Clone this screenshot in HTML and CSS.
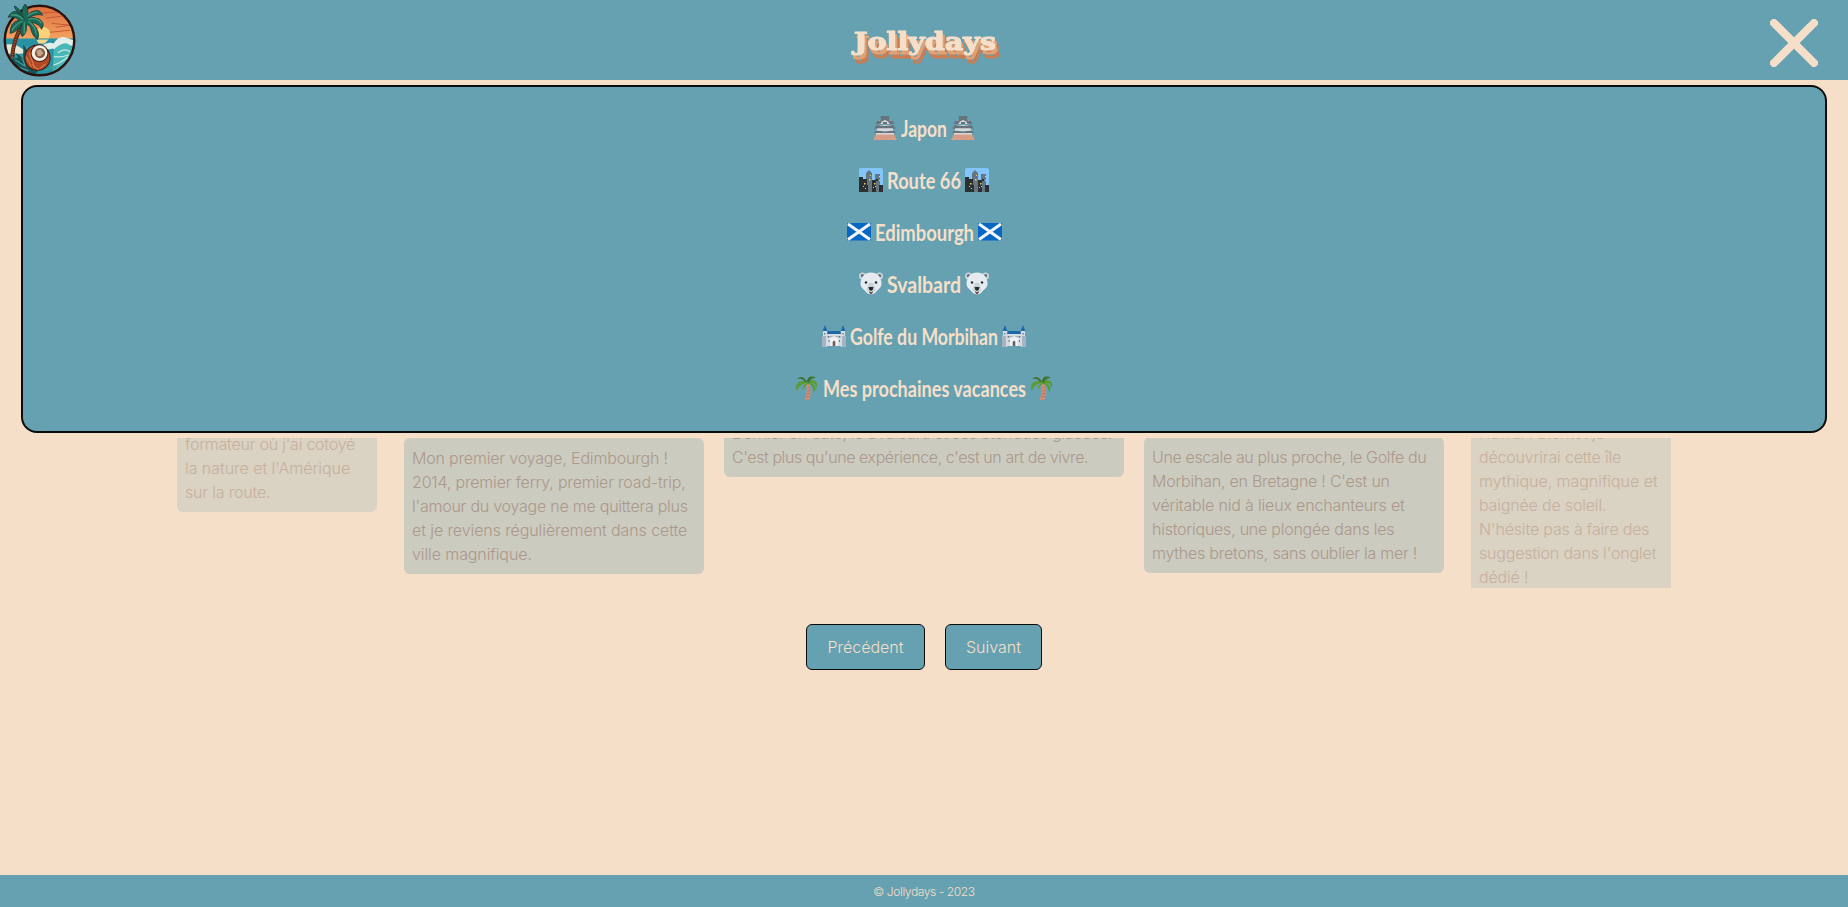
FILE: index.html
```html
<!DOCTYPE html>
<html lang="fr">
<head>
<meta charset="utf-8">
<title>Jollydays</title>
<link rel="stylesheet" href="styles.css">
</head>
<body>
<svg class="sprite" aria-hidden="true">
  <symbol id="japan" viewBox="0 0 24 24">
    <path fill="#d5dadd" d="M6 4h12v4H6zM5 9h14v4H5zM3 14h18v5H3z"/>
    <path fill="#66727c" d="M8 0h8l1 2H7zM8 2h8v2l4 1.500 1.500 2.500h-4L12 5.500 6.500 8h-4L4 5.500 8 4z"/>
    <path fill="#66727c" d="M4 9l8 1 8-1 3 3.500H1zM3 14.500l9 1 9-1 2 2.500H1z"/>
    <path fill="#d5dadd" d="M8 6l4-2 4 2-1 1.500H9zM4 12.500h16v1.500H4z"/>
    <path fill="#66727c" d="M10 6h4v2h-4z"/>
    <path fill="#d79d86" d="M3 18.500h18l3 5.500H0z"/>
  </symbol>
  <symbol id="city" viewBox="0 0 24 24">
    <rect width="24" height="24" rx="2" fill="#82c5fb"/>
    <path fill="#667681" d="M7 24V5l3-3 3 3v19zM16 24V6h5v18z"/>
    <path fill="#2b3035" d="M0 24V9h4v2h4v6h1v7zM13 24V12h4V11h2v6h5v7z"/>
    <path fill="#667681" d="M17 13h3v11h-3z"/>
    <path fill="#f6d34e" d="M5 15h1.500v1.500H5zM4 18h1v1H4zM6 20h1v1H6zM11 7h1v1h-1zM10 11h1.500v1.500H10zM15 15h1.500v1.500H15zM14 19h1v1h-1zM20 8h1.200v1.200H20zM20 12h1v1h-1zM16 18h1v1h-1z"/>
  </symbol>
  <symbol id="scotland" viewBox="0 0 24 24">
    <rect y="3" width="24" height="17.500" rx="1" fill="#0767c4"/>
    <path d="M1 4l22 15.500M23 4L1 19.500" stroke="#f4f5f7" stroke-width="3"/>
  </symbol>
  <symbol id="bear" viewBox="0 0 24 24">
    <circle cx="3.500" cy="4" r="3.500" fill="#cbd6dc"/><circle cx="20.500" cy="4" r="3.500" fill="#cbd6dc"/>
    <circle cx="3.500" cy="3.800" r="1.800" fill="#66737c"/><circle cx="20.500" cy="3.800" r="1.800" fill="#66737c"/>
    <path fill="#e5ebef" d="M12 .5C5.500.5 2 5 1.500 11c-.3 5 4 6.500 6 9.500 1.500 2.300 7.500 2.300 9 0 2-3 6.300-4.500 6-9.500C22 5 18.500.5 12 .5z"/>
    <path fill="#c8d2d8" d="M10 11h4l2.500 7-3 3h-3l-3-3z"/>
    <path fill="#22282c" d="M9.500 15h5l-.8 2.700-1.700 1.300-1.700-1.300z"/>
    <circle cx="7" cy="10.500" r="1.200" fill="#22282c"/><circle cx="17" cy="10.500" r="1.200" fill="#22282c"/>
    <path d="M10 20l2 .7 2-.7" fill="none" stroke="#22282c" stroke-width=".8"/><path fill="#d33e48" d="M10.900 20.900h2.200v1.100h-2.200z"/>
  </symbol>
  <symbol id="castle" viewBox="0 0 24 24">
    <path fill="#d5dce3" d="M1 7h4v16H1zM19 7h4v16h-4zM5 10h14v12H5z"/>
    <path fill="#a7b3c0" d="M0 12h4v11H0zM20 12h4v11h-4zM5 12h14v1.500H5z"/>
    <path fill="#2069a8" d="M3 1l2.300 6H.7zM21 1l2.300 6h-4.600zM6 7h12l1 3H5z"/>
    <path fill="#eef1f4" d="M8 14l4-2 4 2v8H8z"/>
    <path fill="#65788a" d="M2 9h1.300v1.500H2zM20.500 9h1.300v1.500h-1.300zM6 12h1v1.500H6zM17 12h1v1.500h-1zM6.500 16h1v2h-1zM17 16h1v2h-1z"/>
    <path fill="#745d58" d="M10.700 22v-4q1.300-2.500 2.600 0v4z"/>
  </symbol>
  <symbol id="palm" viewBox="0 0 24 24">
    <path fill="#d98d70" d="M11 8l3-.5c2 5 2 10 .5 16l-5 .5C12 18 12.500 13 11 8z"/>
    <path d="M12.500 12l2-.5M12.500 15l2.500-.5M12 18l3-.5M11.500 21l3-.5" stroke="#a95f4c" stroke-width=".8"/>
    <path fill="#5b9b32" d="M12 6C9 4 4 5 2 8c-1.500 3-1 6 0 7 1-4 4-7 10-8-4 2-5 5-4 7 1-3 3-5 5-6 4 0 5 4 6 8 3-3 1-7-3-9 3 0 5 2 5 5 3-4 0-8-4-8z"/>
    <path fill="#3d7530" d="M12 6C9 0 5 0 2 3c4-1 6 0 8 3zM12 6c0-5 4-7 9-4-4 0-6 2-7 5z"/>
  </symbol>
</svg>

<header class="topbar">
  <svg class="badge" viewBox="0 0 72 72" role="img" aria-label="Logo">
    <defs>
      <clipPath id="disc"><circle cx="36" cy="36" r="34"/></clipPath>
      <linearGradient id="sky" x1="0" y1="0" x2="0" y2="1"><stop offset="0" stop-color="#dc6b3d"/><stop offset="1" stop-color="#f2a562"/></linearGradient>
    </defs>
    <g clip-path="url(#disc)">
      <rect width="72" height="36" fill="url(#sky)"/>
      <path d="M38 9l16-1M42 14l16-2M48 19l18 2-14 2M44 28l22-2" fill="none" stroke="#c95a38"/>
      <path fill="#fbd27a" d="M34 34a7 7 0 1 1 11 0z"/>
      <rect y="34" width="72" height="38" fill="#2a93a3"/>
      <path fill="#f3d58b" d="M33 35h12l-4 4h-6z"/>
      <path fill="#e2efe9" d="M38 41q7-4 12-2 5-8 12-6l8 3v6q-7-3-12 2-5 3-9 0-6 2-11-3z"/>
      <path fill="#48b7b8" d="M50 45q10-9 15-5l7 7-9 18-14 2z"/>
      <path d="M54 48q7-5 12-1M50 52q8 1 15-2M50 60q8-2 14-8" fill="none" stroke="#cce7dd" stroke-width="1.200"/>
      <path fill="#e6e6d3" d="M3 40q8-1 14 3l5 3-3 3H5z"/>
      <path fill="#16545a" d="M8 54l7-1-3-5 8 5 0-13 6 8 5-8 5 3-2 24-8 5-14-5z"/>
      <path d="M12 55l9 6M18 50l4 12M12 61l13 5M23 42l3 7M42 65l11-3M46 61l6 3" stroke="#43a098" stroke-width="1.200"/>
      <ellipse cx="34" cy="53" rx="12.500" ry="12.500" fill="#b04925" stroke="#401c15"/>
      <path d="M23 52l5 10M26 48l5 15M29 60l6 5M36 64l6-5" stroke="#e1814c" stroke-width="1"/>
      <circle cx="36" cy="48.500" r="8.800" fill="#482017"/><circle cx="36" cy="48.500" r="7.800" fill="#f2eee2"/>
      <circle cx="36.500" cy="48.500" r="5" fill="#83543f"/><path fill="#c6a48a" d="M33 46l4-1.500 3 4-3 3-3-.5z"/>
    </g>
    <circle cx="36" cy="36" r="34.300" fill="none" stroke="#2b120e" stroke-width="2.400"/>
    <path d="M9 53q1-18 11-34" fill="none" stroke="#542719" stroke-width="4"/>
    <path d="M9 53q1-18 11-34" fill="none" stroke="#a04e2b" stroke-width="2" stroke-dasharray="1.500 1"/>
    <path fill="#1c6857" stroke="#123b38" stroke-width=".8" d="M21 15C18 9 13 5 8 9q-2 2-3 4 7-1 11 3-9 1-9 13 7-1 12-10-4 8 0 13 5-3 4-12 2 0 4 3 2 9 7 12 4-7-6-17 9 2 10 7 4-6-2-10-5-3-11-1 7-5 14-3-2-6-9-4-4 1-6 5 2-8-2-12-4 4-3 10-3-6-8-8 2 6 10 13z"/>
    <path d="M20 15q-5-5-12-4M19 17q-7 3-10 9M21 18v11M25 17q7 5 8 13M25 15q9-2 13 4M24 12q5-4 10-4" fill="none" stroke="#429b78" stroke-width="1.300"/>
  </svg>
  <svg class="brand" viewBox="0 0 156 80" role="img">
    <text class="brand-text" x="8" y="49.500" textLength="142" lengthAdjust="spacingAndGlyphs">Jollydays</text>
  </svg>
  <svg class="close" viewBox="0 0 48 48" role="img" aria-label="Fermer"><path d="M4 4l40 40M44 4L4 44"/></svg>
</header>

<nav class="menu">
  <a class="entry"><svg class="emoji"><use href="#japan"/></svg><svg class="label" width="46" height="32"><text y="24" textLength="46" lengthAdjust="spacingAndGlyphs">Japon</text></svg><svg class="emoji"><use href="#japan"/></svg></a>
  <a class="entry"><svg class="emoji"><use href="#city"/></svg><svg class="label" width="74" height="32"><text y="24" textLength="74" lengthAdjust="spacingAndGlyphs">Route 66</text></svg><svg class="emoji"><use href="#city"/></svg></a>
  <a class="entry"><svg class="emoji"><use href="#scotland"/></svg><svg class="label" width="99" height="32"><text y="24" textLength="99" lengthAdjust="spacingAndGlyphs">Edimbourgh</text></svg><svg class="emoji"><use href="#scotland"/></svg></a>
  <a class="entry"><svg class="emoji"><use href="#bear"/></svg><svg class="label" width="74" height="32"><text y="24" textLength="74" lengthAdjust="spacingAndGlyphs">Svalbard</text></svg><svg class="emoji"><use href="#bear"/></svg></a>
  <a class="entry"><svg class="emoji"><use href="#castle"/></svg><svg class="label" width="148" height="32"><text y="24" textLength="148" lengthAdjust="spacingAndGlyphs">Golfe du Morbihan</text></svg><svg class="emoji"><use href="#castle"/></svg></a>
  <a class="entry"><svg class="emoji"><use href="#palm"/></svg><svg class="label" width="203" height="32"><text y="24" textLength="203" lengthAdjust="spacingAndGlyphs">Mes prochaines vacances</text></svg><svg class="emoji"><use href="#palm"/></svg></a>
</nav>

<main class="content">
  <section class="carousel">
    <p class="card far first"><span class="t3">formateur où j'ai cotoyé</span><br><span class="t0">la nature et l'Amérique</span><br><span class="t2">sur la route.</span></p>
    <p class="card second"><span class="t2">Mon premier voyage, Edimbourgh !</span><br><span class="t2">2014, premier ferry, premier road-trip,</span><br><span class="t3">l'amour du voyage ne me quittera plus</span><br><span class="t1">et je reviens régulièrement dans cette</span><br><span class="t1">ville magnifique.</span></p>
    <p class="card third"><span class="t4">Dernier en date, le Svalbard et ses étendues glacées.</span><br><span class="t6">C'est plus qu'une expérience, c'est un art de vivre.</span></p>
    <p class="card fourth"><span class="t5">Une escale au plus proche, le Golfe du</span><br><span class="t3">Morbihan, en Bretagne ! C'est un</span><br><span class="t2">véritable nid à lieux enchanteurs et</span><br><span class="t3">historiques, une plongée dans les</span><br><span class="t3">mythes bretons, sans oublier la mer !</span></p>
    <p class="card far fifth"><span class="t2">Hawaï ! Bientôt je</span><br><span class="t2">découvrirai cette île</span><br><span class="t0">mythique, magnifique et</span><br><span class="t2">baignée de soleil.</span><br><span class="t2">N'hésite pas à faire des</span><br><span class="t2">suggestion dans l'onglet</span><br><span class="t2">dédié !</span></p>
  </section>
  <div class="controls">
    <button class="btn prev">Précédent</button>
    <button class="btn next">Suivant</button>
  </div>
</main>

<footer class="footer">© Jollydays - 2023</footer>
</body>
</html>
```

FILE: styles.css
```css
* { box-sizing: border-box; }
body {
  margin: 0;
  height: 907px;
  display: flex;
  flex-direction: column;
  overflow: hidden;
  background: #f6dfc9;
  color: #f6dfc9;
  font-family: Inter, "Liberation Sans", sans-serif;
}
.sprite { display: none; }
.topbar {
  height: 80px;
  flex: none;
  display: grid;
  grid-template-columns: 1fr 156px 1fr;
  align-items: center;
  padding: 0 30px 0 3px;
  background: #65a1b1;
}
.badge { width: 73px; height: 73px; }
.brand { width: 156px; height: 80px; margin-left: 13px; }
.brand-text {
  font: 700 24px "DejaVu Serif", serif;
  fill: #f6dfc9;
  stroke: #f6dfc9;
  stroke-width: 1.2px;
  stroke-linejoin: round;
  filter: drop-shadow(2px 4px #dfa277) drop-shadow(2px 4px #c87d55);
}
.close {
  width: 48px;
  height: 48px;
  justify-self: end;
  margin-top: 6px;
  fill: none;
  stroke: #f6dfc9;
  stroke-width: 8;
  stroke-linecap: round;
}
.menu {
  flex: none;
  height: 348px;
  margin: 5px 21px 0;
  padding: 15px 0;
  display: flex;
  flex-direction: column;
  border: 2px solid #0b0b0b;
  border-radius: 16px;
  background: #65a1b1;
}
.entry {
  height: 52px;
  display: flex;
  justify-content: center;
  align-items: center;
  gap: 4px;
}
.emoji { width: 24px; height: 24px; margin-top: -1px; }
.label { overflow: visible; fill: #f6dfc9; font: 700 23.5px Lato, sans-serif; margin-top: 1px; }
.content { flex: 1; padding-top: 5px; }
.carousel {
  height: 150px;
  display: flex;
  align-items: flex-start;
  padding-left: 177px;
  overflow: hidden;
}
.card {
  flex: none;
  margin: 0;
  padding: 8px;
  border-radius: 6px;
  background: #cbcbc0;
  color: #ac988a;
  font-size: 16px;
  font-weight: 300;
  line-height: 24px;
  white-space: nowrap;
}
.far { background: #dad2c3; color: #c6b09d; }
.t0 { letter-spacing: -0.05px; }
.t1 { letter-spacing: -0.1px; }
.t2 { letter-spacing: -0.18px; }
.t3 { letter-spacing: -0.24px; }
.t4 { letter-spacing: -0.3px; }
.t5 { letter-spacing: -0.36px; }
.t6 { letter-spacing: -0.43px; }
.first { width: 200px; margin-top: -14px; }
.second { width: 300px; margin-left: 27px; }
.third { width: 400px; margin: -25px 0 0 20px; }
.fourth { width: 300px; margin: -1px 0 0 20px; }
.fifth { width: 200px; margin: -25px 0 0 27px; }
.controls {
  display: flex;
  justify-content: center;
  gap: 20px;
  margin-top: 36px;
}
.btn {
  height: 46px;
  padding: 0;
  border: 1px solid #0b0b0b;
  border-radius: 6px;
  background: #65a1b1;
  color: #f6dfc9;
  font: 300 16px Inter, sans-serif;
}
.prev { width: 119px; }
.next { width: 97px; }
.footer {
  height: 32px;
  flex: none;
  background: #65a1b1;
  font-size: 12px;
  font-weight: 300;
  letter-spacing: -0.39px;
  line-height: 34px;
  text-align: center;
}
```
